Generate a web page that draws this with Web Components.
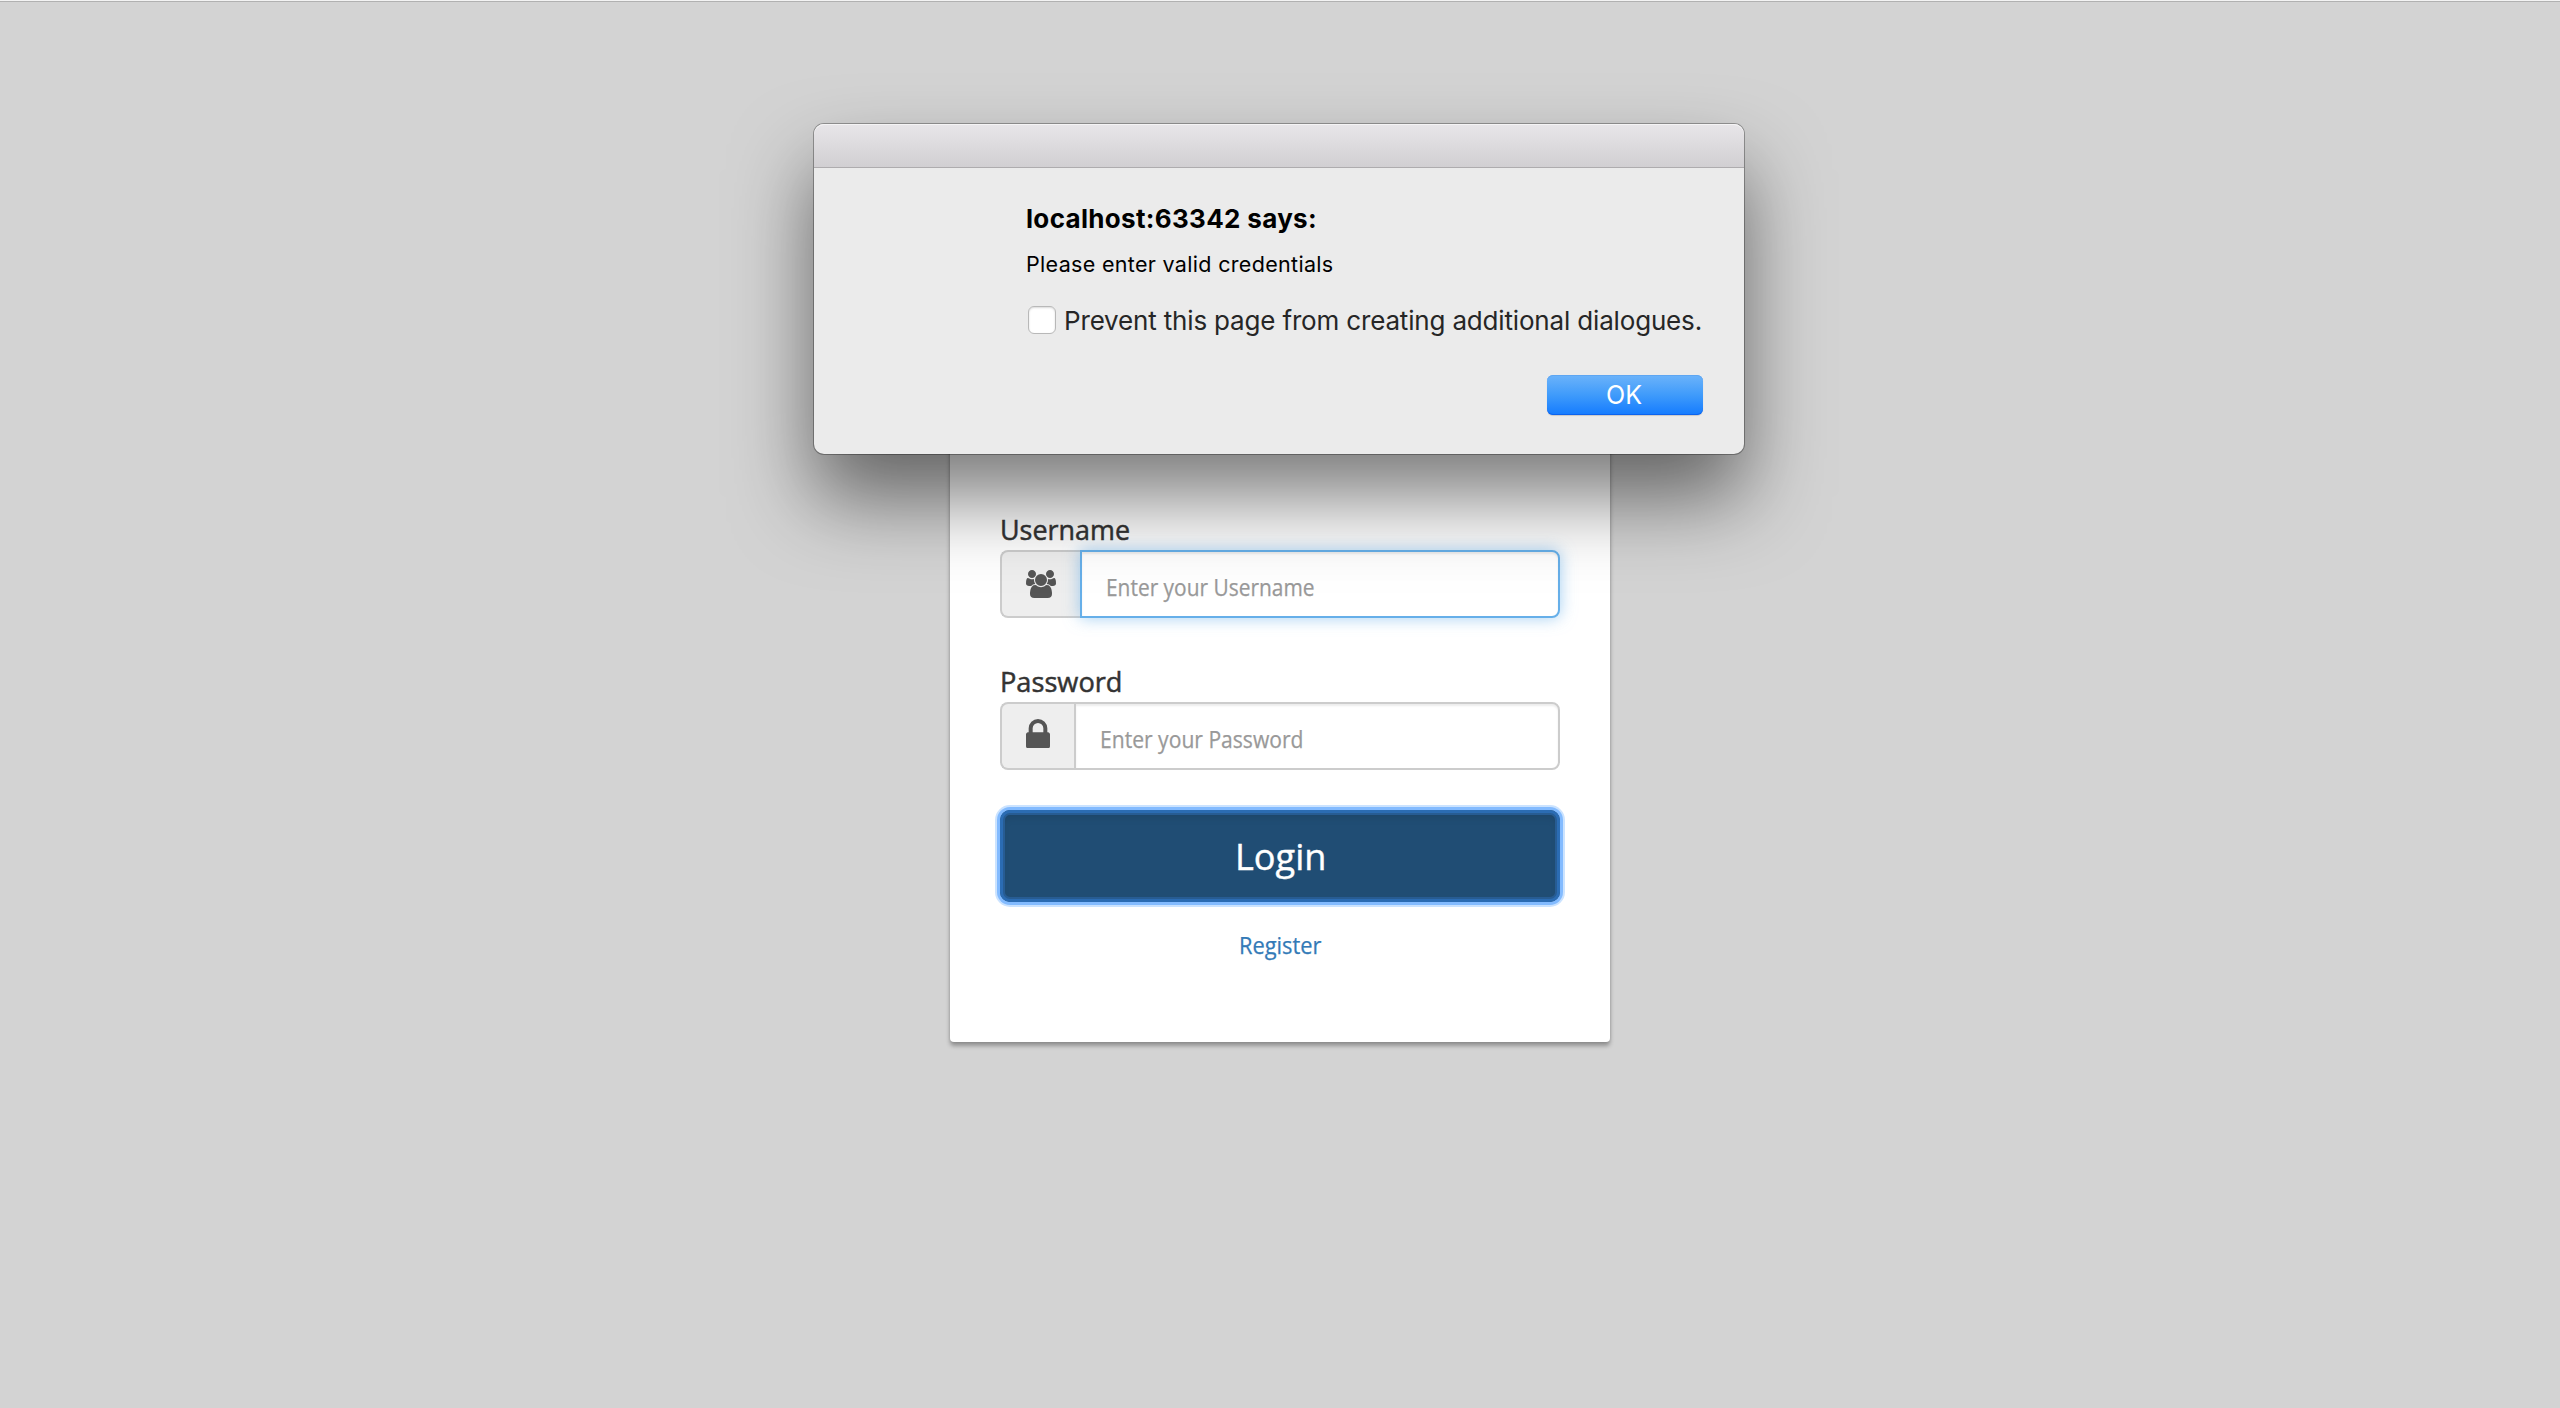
<!DOCTYPE html>
<html lang="en"><head><meta charset="utf-8"><title>Login</title>
<style>html,body{margin:0;height:100%;overflow:hidden;background:#d3d3d3}</style></head>
<body><login-page></login-page>
<script>
const make=(name,html,after)=>customElements.define(name,class extends HTMLElement{
  constructor(){super();this.attachShadow({mode:'open'}).innerHTML=html;}
  connectedCallback(){if(after)after.call(this,this.shadowRoot);}
});

// One line of text that spans the width it is given: tracked, or condensed when "condense" is set.
make('fit-text','<style>:host{display:block;white-space:nowrap}span{display:inline-block;transform-origin:0 50%}</style><span><slot></slot></span>',function(r){
  const s=r.querySelector('span'),t=this.textContent,target=+this.getAttribute('span');
  const w=s.getBoundingClientRect().width;
  if(this.hasAttribute('condense'))s.style.transform='scaleX('+target/w+')';
  else s.style.letterSpacing=((target-w)/t.length)+'px';
});

make('users-icon','<style>:host,svg{display:block}</style><svg width="30" height="28" viewBox="0 0 1920 1792" fill="#555"><path d="M593 896q-162 5-265 128h-134q-82 0-138-40.5t-56-118.5q0-353 124-353 6 0 43.5 21t97.5 42.5 119 21.5q67 0 133-23-5 37-5 66 0 139 81 256zm1071 637q0 120-73 189.5t-194 69.5h-874q-121 0-194-69.5t-73-189.5q0-53 3.5-103.5t14-109 26.5-108.5 43-97.5 62-81 85.5-53.5 111.5-20q10 0 43 21.5t73 48 107 48 135 21.5 135-21.5 107-48 73-48 43-21.5q61 0 111.5 20t85.5 53.5 62 81 43 97.5 26.5 108.5 14 109 3.5 103.5zm-1024-1277q0 106-75 181t-181 75-181-75-75-181 75-181 181-75 181 75 75 181zm704 384q0 159-112.5 271.5t-271.5 112.5-271.5-112.5-112.5-271.5 112.5-271.5 271.5-112.5 271.5 112.5 112.5 271.5zm576 225q0 78-56 118.5t-138 40.5h-134q-103-123-265-128 81-117 81-256 0-29-5-66 66 23 133 23 59 0 119-21.5t97.5-42.5 43.5-21q124 0 124 353zm-128-609q0 106-75 181t-181 75-181-75-75-181 75-181 181-75 181 75 75 181z"/></svg>');
make('lock-icon','<style>:host,svg{display:block}</style><svg width="24" height="29.33" viewBox="320 128 1152 1408" fill="#555"><path d="M640 768h512v-192q0-106-75-181t-181-75-181 75-75 181v192zm832 96v576q0 40-28 68t-68 28h-960q-40 0-68-28t-28-68v-576q0-40 28-68t68-28h32v-192q0-184 132-316t316-132 316 132 132 316v192h32q40 0 68 28t28 68z"/></svg>');

make('input-group',`<style>
:host{display:flex;flex-direction:column;font-family:"Open Sans","Noto Sans",sans-serif;color:#333}
.label{font-size:28px;line-height:38px;padding-bottom:2px;margin-left:-.5px;-webkit-text-stroke:.5px #333}
.row{display:flex;height:68px}
.addon{box-sizing:border-box;background:#eee;border:2px solid #ccc;border-right:0;border-radius:8px 0 0 8px;padding:18px 24px 0}
:host([kind=lock]) .addon{padding-top:15px}
.field{box-sizing:border-box;flex:1;background:#fff;border:2px solid #ccc;border-radius:0 8px 8px 0;box-shadow:inset 0 2px 2px rgba(0,0,0,.075);padding-left:24px;color:#999;font-size:23.5px;line-height:71px;-webkit-text-stroke:.25px #999}
:host([focused]) .field{border-color:#66afe9;box-shadow:inset 0 2px 2px rgba(0,0,0,.075),0 0 16px rgba(102,175,233,.6)}
</style><div class="label"><slot name="label"></slot></div><div class="row"><div class="addon"><slot name="icon"></slot></div><div class="field"><slot></slot></div></div>`);

make('login-button',`<style>
:host{display:block;height:92px;box-sizing:border-box;border-radius:10px;background:#204d74;position:relative;box-shadow:inset 0 6px 10px rgba(0,0,0,.125);color:#fff;font:37px/92px "Open Sans","Noto Sans",sans-serif;padding-left:235px;-webkit-text-stroke:.4px #fff}
.ring{position:absolute;inset:0;border-radius:10px;box-shadow:inset 0 0 0 3px #2b6cb3,inset 0 0 0 5px #275c93,0 0 0 3px #83bbff,0 0 0 5px #cbe3ff}
</style><div class="ring"></div><slot></slot>`);

make('login-card',`<style>
:host{display:flex;flex-direction:column;box-sizing:border-box;width:660px;height:842px;padding:310px 50px 0;background:#fff;border-radius:4px;box-shadow:0 4px 4px rgba(0,0,0,.3),0 0 3px rgba(0,0,0,.12)}
input-group+input-group{margin-top:44px}
login-button{margin-top:40px}
.register{margin:23px 0 0 238.5px;font:24px/40px "Open Sans","Noto Sans",sans-serif;color:#337ab7;-webkit-text-stroke:.25px #337ab7}
</style>
<input-group focused><fit-text condense slot="label" span="130">Username</fit-text><users-icon slot="icon"></users-icon><fit-text condense span="208.5">Enter your Username</fit-text></input-group>
<input-group kind="lock"><fit-text condense slot="label" span="122.5">Password</fit-text><lock-icon slot="icon"></lock-icon><fit-text condense span="203.5">Enter your Password</fit-text></input-group>
<login-button><fit-text condense span="91.5">Login</fit-text></login-button>
<fit-text condense class="register" span="82.5">Register</fit-text>`);

make('alert-dialog',`<style>
:host{position:absolute;left:814px;top:124px;width:930px;height:330px;display:flex;flex-direction:column;border-radius:10px;background:#ebebeb;color:#000;font-family:Inter,"Liberation Sans",sans-serif;box-shadow:0 0 0 1px rgba(0,0,0,.3),0 44px 80px rgba(0,0,0,.52)}
.bar{box-sizing:border-box;height:44px;border-radius:10px 10px 0 0;background:linear-gradient(#e8e6e9,#d1cfd2);border-bottom:1px solid #aeacae;box-shadow:inset 0 1px #f5f4f5}
.body{padding:33px 41px 0 212px;display:flex;flex-direction:column}
.title{font-size:26px;line-height:36px;font-weight:700}
.msg{font-size:21.5px;line-height:32px;margin-top:11px}
.check{display:flex;align-items:center;gap:8px;height:28px;margin:26px 0 0 2px;font-size:26px;line-height:32px;color:#262626}
.check fit-text{padding-top:2px}
.box{box-sizing:border-box;flex:none;width:28px;height:28px;border-radius:6px;background:#fff;border:1px solid #b8b8b8;box-shadow:inset 0 1px 2px rgba(0,0,0,.15)}
.ok{align-self:flex-end;width:156px;height:40px;margin-top:41px;box-sizing:border-box;border-radius:6px;background:linear-gradient(#6cb3fa,#3f9bfb 50%,#147bff);box-shadow:inset 0 1px #5ea6f2,inset 0 -1px #0c63ee,0 1px 1px rgba(0,0,0,.15);color:#fff;font-size:26px;line-height:40px;padding-left:59px}
</style><div class="bar"></div><div class="body">
<fit-text class="title" span="291">localhost:63342 says:</fit-text>
<fit-text class="msg" span="307.5">Please enter valid credentials</fit-text>
<div class="check"><div class="box"></div><fit-text span="638">Prevent this page from creating additional dialogues.</fit-text></div>
<div class="ok"><fit-text condense span="36">OK</fit-text></div></div>`);

make('login-page',`<style>
:host{display:flex;flex-direction:column;align-items:center;height:100vh;background:#d3d3d3}
.edge{align-self:stretch;height:1px;background:#f3f3f3;border-bottom:1px solid #b1b1b1;margin-bottom:198px}
</style><div class="edge"></div><login-card></login-card><alert-dialog></alert-dialog>`);
</script></body></html>
